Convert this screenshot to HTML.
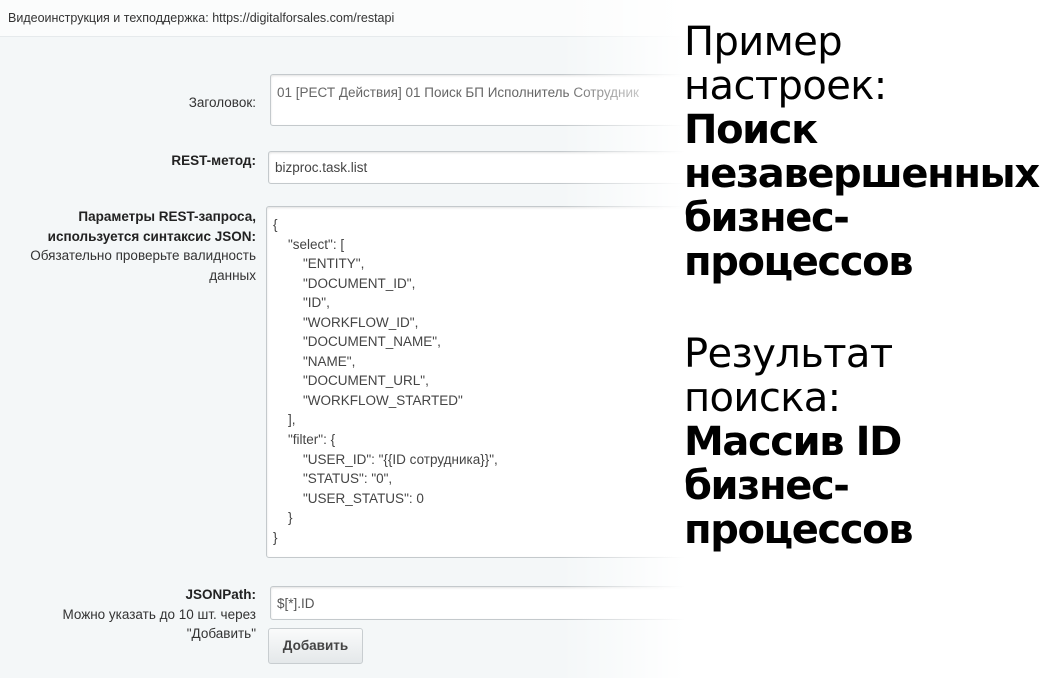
<!DOCTYPE html>
<html><head><meta charset="utf-8"><style>
*{margin:0;padding:0;box-sizing:border-box}
body{width:1062px;height:678px;overflow:hidden;background:#f4f7f8;position:relative;font-family:"Liberation Sans","DejaVu Sans",sans-serif;color:#333}
.top{position:absolute;left:0;top:0;width:1062px;height:37px;background:#fbfcfc;border-bottom:1px solid #e6eaec;font-size:12.5px;color:#333;padding:11px 0 0 8px}
.lbl{position:absolute;right:806px;text-align:right;font-size:13.5px;line-height:19.5px;color:#333;white-space:nowrap}
.b{font-weight:bold;color:#222}
.box{position:absolute;background:#fff;border:1px solid #c4c9cc;border-radius:3px;box-shadow:inset 0 1px 2px rgba(0,0,0,.12);font-size:13.5px;color:#444;padding:7px 0 0 6px;white-space:pre;line-height:19.55px}
.btn{position:absolute;left:268px;top:628px;width:95px;height:36px;border:1px solid #c8cdd0;border-radius:3px;background:linear-gradient(#fafbfb,#e4e8ea);font-size:13.5px;font-weight:bold;color:#444;text-align:center;line-height:34px}
.fade{position:absolute;left:560px;top:0;width:125px;height:678px;background:linear-gradient(90deg,rgba(255,255,255,0),#fff)}
.wh{position:absolute;left:684px;top:0;width:378px;height:678px;background:#fff}
.big{position:absolute;left:684px;font-family:"DejaVu Sans",sans-serif;font-size:40px;line-height:44px;color:#000;white-space:nowrap}
.big .r{letter-spacing:-0.6px}
.big b{font-weight:bold;letter-spacing:-1.4px}
</style></head><body>
<div class="top">Видеоинструкция и техподдержка: https://digitalforsales.com/restapi</div>
<div class="lbl" style="top:93px">Заголовок:</div>
<div class="box" style="left:270px;top:74px;width:500px;height:52px;color:#666;padding-top:8px">01 [РЕСТ Действия] 01 Поиск БП Исполнитель Сотрудник</div>
<div class="lbl b" style="top:151px">REST-метод:</div>
<div class="box" style="left:268px;top:151px;width:500px;height:33px;padding-top:6px">bizproc.task.list</div>
<div class="lbl" style="top:207px"><span class="b">Параметры REST-запроса,<br>используется синтаксис JSON:</span><br>Обязательно проверьте валидность<br>данных</div>
<div class="box" style="left:266px;top:206px;width:500px;height:352px;padding-top:8px">{
    "select": [
        "ENTITY",
        "DOCUMENT_ID",
        "ID",
        "WORKFLOW_ID",
        "DOCUMENT_NAME",
        "NAME",
        "DOCUMENT_URL",
        "WORKFLOW_STARTED"
    ],
    "filter": {
        "USER_ID": "{{ID сотрудника}}",
        "STATUS": "0",
        "USER_STATUS": 0
    }
}</div>
<div class="lbl" style="top:585px"><span class="b">JSONPath:</span><br>Можно указать до 10 шт. через<br>"Добавить"</div>
<div class="box" style="left:270px;top:586px;width:500px;height:34px;padding-top:7px;color:#555">$[*].ID</div>
<div class="btn">Добавить</div>
<div class="fade"></div>
<div class="wh"></div>
<div class="big" style="top:20px"><span class="r">Пример<br>настроек:</span><br><b>Поиск<br>незавершенных<br>бизнес-<br>процессов</b></div>
<div class="big" style="top:332px"><span class="r">Результат<br>поиска:</span><br><b>Массив ID<br>бизнес-<br>процессов</b></div>
</body></html>
